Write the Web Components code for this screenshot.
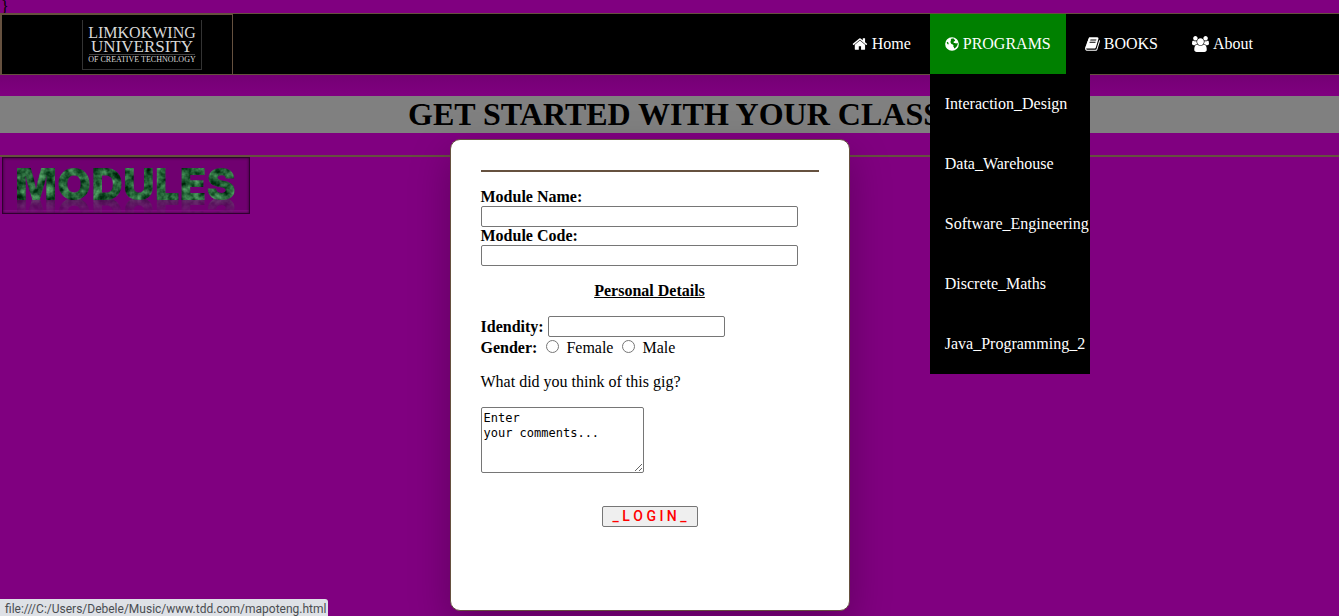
<!DOCTYPE html>
<html lang="en">
<head>
<meta charset="utf-8">
<title>Modules</title>
<style>
  html, body { height: 100%; }
  body { margin: 0; overflow: hidden; background: #800080; color: #000; font: 16px/18px "Liberation Serif", "Times New Roman", serif; --line: #66513f; }
</style>
</head>
<body>
<module-page>
  <site-nav slot="nav"></site-nav>
  <page-banner slot="banner">GET STARTED WITH YOUR CLASS</page-banner>
  <modules-picture slot="picture"></modules-picture>
  <login-card slot="card"></login-card>
  <status-hint slot="status">file:///C:/Users/Debele/Music/www.tdd.com/mapoteng.html</status-hint>
</module-page>
<script>
class Base extends HTMLElement {
  constructor() {
    super();
    this.attachShadow({ mode: "open" }).innerHTML = "<style>:host,*{box-sizing:border-box}</style>" + this.constructor.markup;
  }
}

customElements.define("module-page", class extends Base {
  static markup = `
  <style>
    :host { display: block; position: relative; min-height: 100%; }
    .stray { height: 13px; padding-left: 1px; line-height: 13px; }
    hr { margin: 22px 0 0; border: 0; height: 2px; background: var(--line); }
  </style>
  <div class="stray">}</div>
  <slot name="nav"></slot>
  <main>
    <slot name="banner"></slot>
    <hr>
    <slot name="picture"></slot>
    <slot name="card"></slot>
  </main>
  <slot name="status"></slot>`;
});

customElements.define("university-logo", class extends Base {
  static markup = `
  <style>
    :host { display: block; width: 120px; height: 50px; border: solid #333; border-width: 0 1px 1px; padding-top: 6px;
      color: #d8d8d8; white-space: nowrap; }
    div { display: flex; justify-content: center; }
    .a { font-size: 16px; line-height: 13px; }
    .b { font-size: 17px; line-height: 15px; }
    .c { font-size: 8px; line-height: 10px; border-top: 1px solid #444; margin: 0 6px; }
  </style>
  <div class="a">LIMKOKWING</div><div class="b">UNIVERSITY</div><div class="c">OF CREATIVE TECHNOLOGY</div>`;
});

customElements.define("nav-item", class extends Base {
  static markup = `
  <style>
    :host { display: block; position: relative; color: #fff; line-height: 60px; }
    :host([active]) { background: #008000; }
    a { display: flex; align-items: center; gap: 4px; padding: 0 15px; color: inherit; text-decoration: none; white-space: nowrap; }
    svg { flex: none; height: 16px; fill: currentColor; overflow: visible; }
  </style>
  <a href="#"><svg aria-hidden="true"></svg><slot></slot></a><slot name="menu"></slot>`;
  connectedCallback() {
    const icons = {
      home: [15, "64 0 1664 1792", '<path d="M1408 992v480q0 26-19 45t-45 19h-384v-384h-256v384h-384q-26 0-45-19t-19-45v-480q0-1 .5-3t.5-3l575-474 575 474q1 2 1 6zm223-69l-62 74q-8 9-21 11h-3q-13 0-21-7l-692-577-692 577q-12 8-24 7-13-2-21-11l-62-74q-8-10-7-23.5t11-21.5l719-599q32-26 76-26t76 26l244 204v-195q0-14 9-23t23-9h192q14 0 23 9t9 23v408l219 182q10 8 11 21.5t-7 23.5z"/>'],
      globe: [14, "128 0 1536 1792", '<path fill-rule="evenodd" d="M896 128a768 768 0 1 0 0 1536a768 768 0 0 0 0-1536zM860 270l210 10 130 70-70 70 110 60-10 90-130 40-40 90 60 90 110-20 120 60 150-60 40 60-30 190-90 160-130 140-150 90-30-150-80-110 40-120-90-90-150-50-90-140-10-170 60-120-40-80zM330 640l130 60 60 150-30 90-80-20-90-130z"/>'],
      book: [15, "64 0 1664 1792", '<path d="M1703 478q40 57 18 129l-275 906q-19 64-76.5 107.5t-122.5 43.5h-923q-77 0-148.5-53.5t-99.5-131.5q-24-67-2-127 0-4 3-27t4-37q1-8-3-21.5t-3-19.5q2-11 8-21t16.5-23.5 16.5-23.5q23-38 45-91.5t30-91.5q3-10 .5-30t-.5-28q3-11 17-28t17-23q21-36 42-92t25-90q1-9-2.5-32t.5-28q4-13 22-30.5t22-22.5q19-26 42.5-84.5t27.5-96.5q1-8-3-25.5t-2-26.5q2-8 9-18t18-23 17-21q8-12 16.5-30.5t15-35 16-36 19.5-32 26.5-23.5 36-11.5 47.5 5.5l-1 3q38-9 51-9h761q74 0 114 56t18 130l-274 906q-36 119-71.5 153.5t-128.5 34.5h-869q-27 0-38 15-11 16-1 43 24 70 144 70h923q29 0 56-15.5t35-41.5l300-987q7-22 5-57 38 15 59 43zm-1064 2q-4 13 2 22.5t20 9.5h608q13 0 25.5-9.5t16.5-22.5l21-64q4-13-2-22.5t-20-9.5h-608q-13 0-25.5 9.5t-16.5 22.5zm-83 256q-4 13 2 22.5t20 9.5h608q13 0 25.5-9.5t16.5-22.5l21-64q4-13-2-22.5t-20-9.5h-608q-13 0-25.5 9.5t-16.5 22.5z"/>'],
      users: [17, "-64 0 1920 1792", '<path d="M529 896q-162 5-265 128h-134q-82 0-138-40.5t-56-118.5q0-353 124-353 6 0 43.5 21t97.5 42.5 119 21.5q67 0 133-23-5 37-5 66 0 139 81 256zm1071 637q0 120-73 189.5t-194 69.5h-874q-121 0-194-69.5t-73-189.5q0-53 3.5-103.5t14-109 26.5-108.5 43-97.5 62-81 85.5-53.5 111.5-20q10 0 43 21.5t73 48 107 48 135 21.5 135-21.5 107-48 73-48 43-21.5q61 0 111.5 20t85.5 53.5 62 81 43 97.5 26.5 108.5 14 109 3.5 103.5zm-1024-1277q0 106-75 181t-181 75-181-75-75-181 75-181 181-75 181 75 75 181zm704 384q0 159-112.5 271.5t-271.5 112.5-271.5-112.5-112.5-271.5 112.5-271.5 271.5-112.5 271.5 112.5 112.5 271.5zm576 225q0 78-56 118.5t-138 40.5h-134q-103-123-265-128 81-117 81-256 0-29-5-66 66 23 133 23 59 0 119-21.5t97.5-42.5 43.5-21q124 0 124 353zm-128-609q0 106-75 181t-181 75-181-75-75-181 75-181 181-75 181 75 75 181z"/>']
    };
    const [w, box, art] = icons[this.getAttribute("icon")];
    const svg = this.shadowRoot.querySelector("svg");
    svg.setAttribute("viewBox", box);
    svg.setAttribute("width", w);
    svg.innerHTML = art;
  }
});

customElements.define("drop-menu", class extends Base {
  static markup = `
  <style>
    :host { display: block; position: absolute; top: 100%; left: 0; width: 160px; background: #000; z-index: 5; }
    ::slotted(a) { display: block; padding: 0 15px; color: #fff; text-decoration: none; line-height: 60px; }
  </style><slot></slot>`;
});

customElements.define("site-nav", class extends Base {
  static markup = `
  <style>
    :host { display: flex; position: relative; z-index: 3; justify-content: space-between; background: #000;
      border: solid var(--line); border-width: 1px 0; }
    .brand { display: flex; justify-content: flex-end; align-items: center; width: 233px; padding-right: 30px;
      border: solid var(--line); border-width: 1px 1px 0 2px; }
    nav { display: flex; gap: 4px; padding-right: 71px; }
  </style>
  <div class="brand"><university-logo></university-logo></div>
  <nav>
    <nav-item icon="home">Home</nav-item>
    <nav-item icon="globe" active>PROGRAMS
      <drop-menu slot="menu">
        <a href="#">Interaction_Design</a><a href="#">Data_Warehouse</a><a href="#">Software_Engineering</a><a href="#">Discrete_Maths</a><a href="#">Java_Programming_2</a>
      </drop-menu>
    </nav-item>
    <nav-item icon="book">BOOKS</nav-item>
    <nav-item icon="users">About</nav-item>
  </nav>`;
});

customElements.define("page-banner", class extends Base {
  static markup = `
  <style>
    :host { display: block; padding-top: 21px; background: linear-gradient(#740074, #800080 21px, #808080 21px); }
    h1 { margin: 0; padding-left: 10px; font-size: 32px; line-height: 37px; text-align: center; }
  </style><h1><slot></slot></h1>`;
});

customElements.define("modules-picture", class extends Base {
  static markup = `
  <style>
    :host { display: block; width: 248px; height: 57px; margin-left: 2px; padding: 6px 0 0 12px; overflow: hidden;
      background: #700070; border: 1px solid #300030; box-shadow: inset 0 0 3px #300030, inset 0 -3px 0 #800a80; }
    svg { display: block; width: 0; height: 0; }
    span { display: block; width: max-content; font: 900 44px/40px Inter, sans-serif; color: #17592c; filter: url(#grain);
      -webkit-box-reflect: below -10px linear-gradient(transparent 45%, rgba(0,0,0,.45)); }
  </style>
  <svg aria-hidden="true"><filter id="grain" x="0" y="0" width="1" height="1" color-interpolation-filters="sRGB">
    <feTurbulence type="fractalNoise" baseFrequency=".13" numOctaves="3" seed="4"/>
    <feColorMatrix values="0.6 0 0 0 -.16  .8 0 0 0 -.02  .6 0 0 0 -.09  0 0 0 0 1"/>
    <feComposite in2="SourceGraphic" operator="in"/>
  </filter></svg>
  <span>MODULES</span>`;
});

customElements.define("login-card", class extends Base {
  static markup = `
  <style>
    :host { display: block; position: absolute; z-index: 2; top: 139px; left: calc(50% - 220px); width: 400px; height: 472px;
      padding: 30px; background: #fff; border: 1px solid var(--line); border-radius: 10px; box-shadow: 0 15px 40px rgba(0,0,0,.25); }
    hr { margin: 0 0 16px; border: 0; height: 2px; background: var(--line); }
    label, .cap { display: block; font-weight: bold; height: 18px; }
    input { display: block; height: 21px; margin: 0; }
    input, textarea { border: 1px solid #767676; border-radius: 2px; background: #fff; }
    .wide { width: 317px; }
    h2 { margin: 16px 0; font-size: 16px; line-height: 18px; text-align: center; text-decoration: underline; }
    .row { display: flex; align-items: center; gap: 4px; }
    .row input { width: 177px; }
    fieldset { display: flex; align-items: flex-start; margin: 2px 0 0; padding: 0; border: 0; }
    fieldset input[type=radio] { width: 13px; height: 13px; margin: 1px 7px 0 9px; }
    fieldset label { font-weight: normal; }
    p { margin: 16px 0; }
    textarea { display: block; width: 163px; height: 66px; padding: 3px 2px 2px; font: 12px/15px "DejaVu Sans Mono", monospace; }
    button { display: block; width: 96px; height: 21px; margin: 33px auto 0; padding: 0; border: 1px solid #767676; border-radius: 2px;
      background: #efefef; color: red; font: 500 14px/19px Roboto, sans-serif; }
  </style>
  <form>
    <hr>
    <label for="name">Module Name:</label><input class="wide" id="name">
    <label for="code">Module Code:</label><input class="wide" id="code">
    <h2>Personal Details</h2>
    <div class="row"><label for="ident">Idendity:</label><input id="ident"></div>
    <fieldset><span class="cap">Gender:</span>
      <input type="radio" name="g" id="f"><label for="f">Female</label>
      <input type="radio" name="g" id="m"><label for="m">Male</label>
    </fieldset>
    <p id="q">What did you think of this gig?</p>
    <textarea aria-labelledby="q">Enter
your comments...</textarea>
    <button type="button">_ L O G I N _</button>
  </form>`;
});

customElements.define("status-hint", class extends Base {
  static markup = `
  <style>
    :host { display: block; position: fixed; z-index: 6; left: 0; bottom: 0; height: 17px; padding: 2px 2px 0 5px; overflow: hidden;
      background: #dee1e6; border-top-right-radius: 3px; color: #4a4d51; font: 12px/17px Roboto, sans-serif; white-space: nowrap; }
  </style><slot></slot>`;
});
</script>
</body>
</html>
